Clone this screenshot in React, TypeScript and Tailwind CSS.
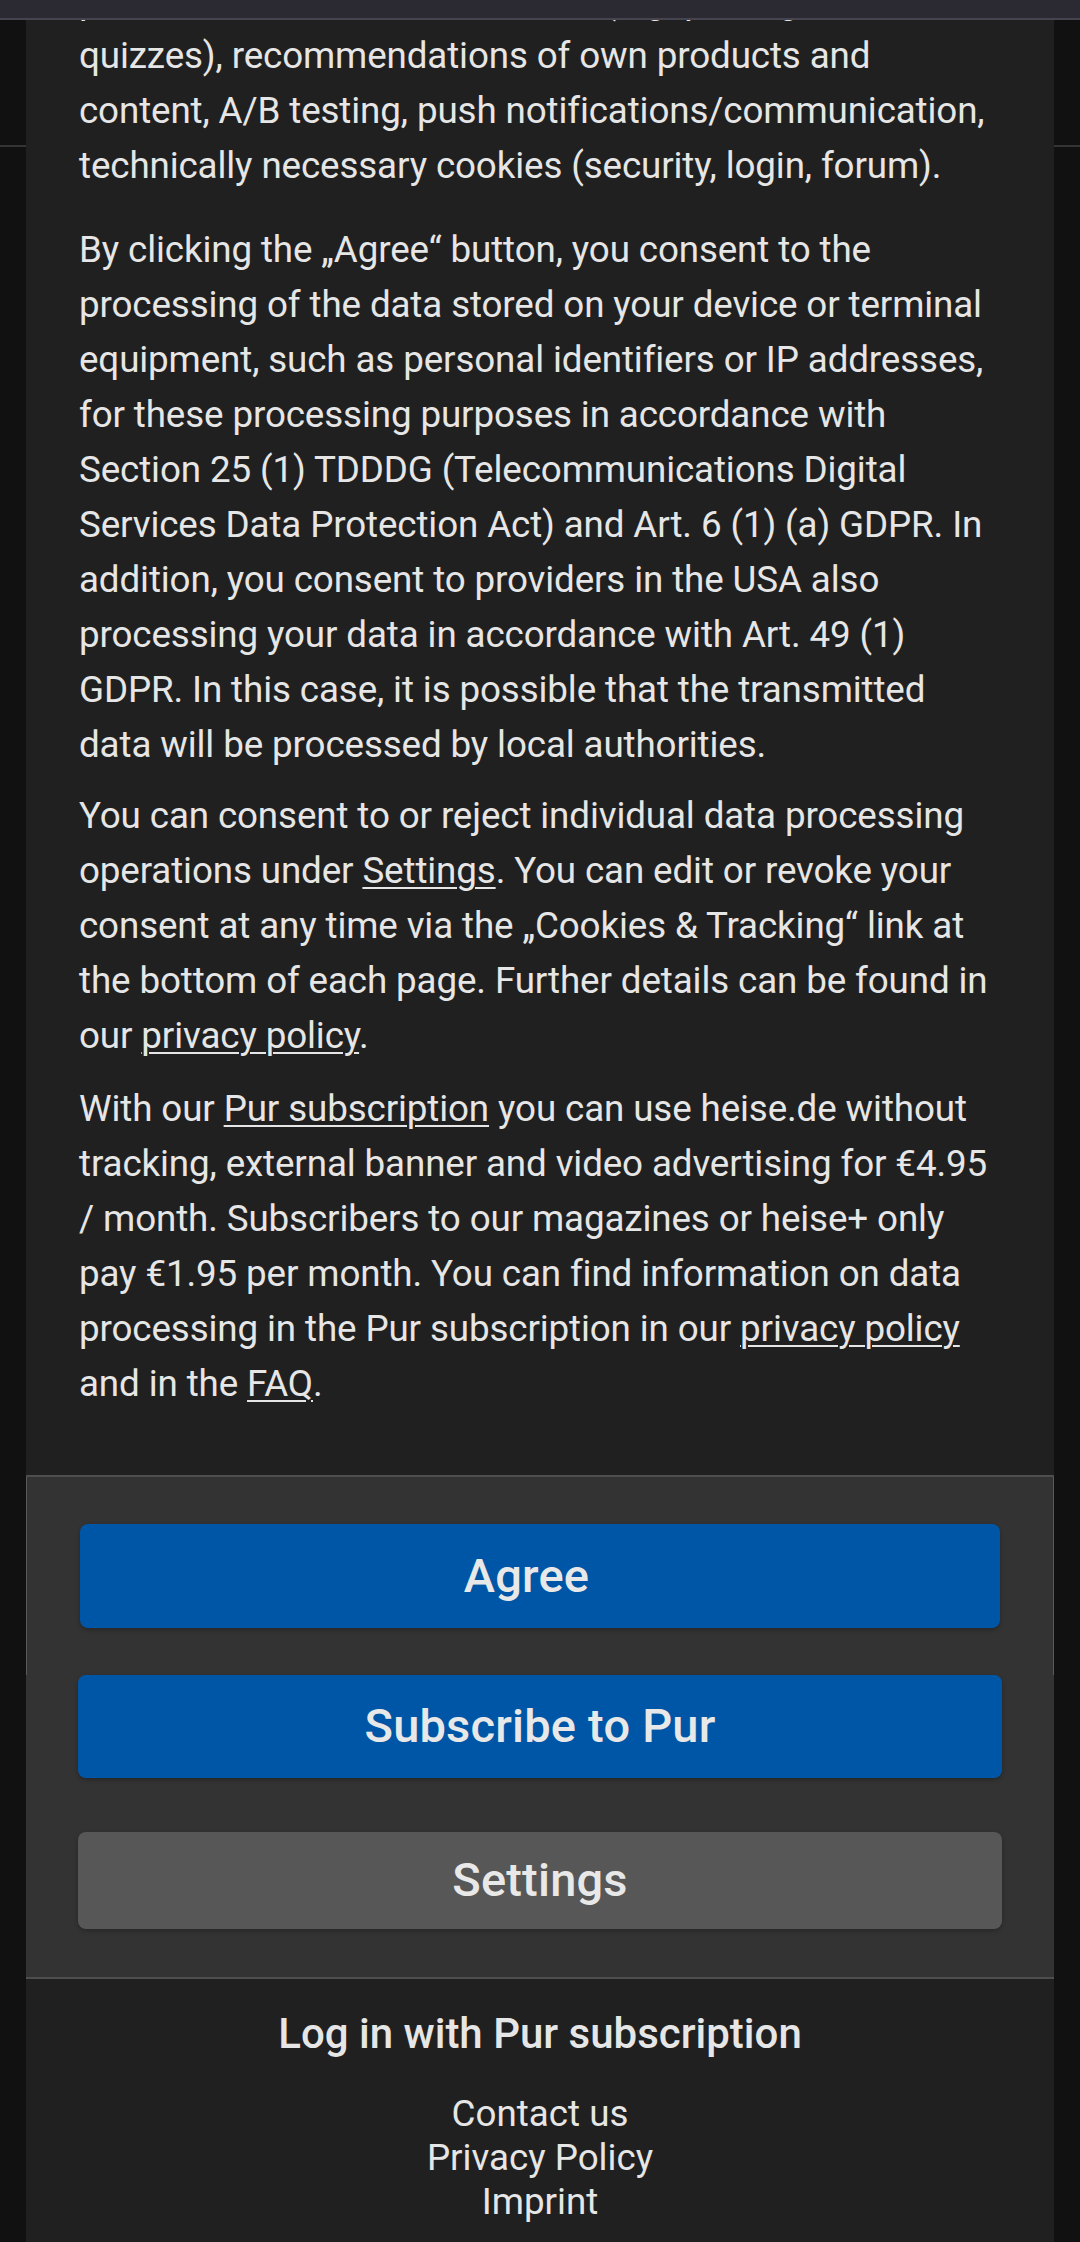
import React from "react";

const font = { fontFamily: "Roboto, 'Noto Sans', 'Liberation Sans', sans-serif" };

function Link({ children }: { children: React.ReactNode }) {
  return <span className="underline decoration-[1.5px] underline-offset-[4px]">{children}</span>;
}

function Button({ label, tone, shift }: { label: string; tone: "blue" | "gray"; shift?: boolean }) {
  const color = tone === "blue" ? "bg-[#0056a6]" : "bg-[#575757]";
  return (
    <button
      className={`w-full flex items-center justify-center rounded-[8px] ${color} ${shift ? "pr-[27px]" : ""} text-[#e8e8e8] text-[47px] font-medium tracking-[0.2px] shadow-[0_2px_4px_rgba(0,0,0,0.25)]`}
      style={font}
    >
      {label}
    </button>
  );
}

export default function App() {
  return (
    <div className="h-[2242px] w-[1080px] overflow-hidden bg-[#111111] flex flex-col" style={font}>
      {/* browser bar on top */}
      <div className="h-[20px] shrink-0 bg-[#2b2a33] border-b-2 border-[#46454f]" />

      <div className="relative flex-1 overflow-hidden flex">
        {/* page behind overlay */}
        <div className="w-[26px] shrink-0">
          <div className="h-[127px] border-b-2 border-[#343434]" />
        </div>

        <div className="w-[1028px] shrink-0 bg-[#202020] flex flex-col">
          <div className="px-[53px] mt-[-46.7px] pb-[64.3px] text-[36.75px] leading-[55px] tracking-[-0.12px] text-[#e6e6e6]">
            <p className="mb-[28.7px]">
              personalised content and offers (e.g. polls, games or
              <br />
              quizzes), recommendations of own products and content, A/B testing, push
              notifications/communication, technically necessary cookies (security, login, forum).
            </p>
            <p className="mb-[16.3px]">
              By clicking the „Agree“ button, you consent to the processing of the data stored on your
              device or terminal equipment, such as personal identifiers or IP addresses, for these
              processing purposes in accordance with Section 25 (1) TDDDG (Telecommunications Digital
              Services Data Protection Act) and Art. 6 (1) (a) GDPR. In addition, you consent to
              providers in the USA also processing your data in accordance with Art. 49 (1) GDPR. In
              this case, it is possible that the transmitted data will be processed by local
              authorities.
            </p>
            <p className="mb-[17.4px]">
              You can consent to or reject individual data processing operations under{" "}
              <Link>Settings</Link>. You can edit or revoke your consent at any time via the „Cookies
              &amp; Tracking“ link at the bottom of each page. Further details can be found in our{" "}
              <Link>privacy policy</Link>.
            </p>
            <p>
              With our <Link>Pur subscription</Link> you can use heise.de without tracking, external
              banner and video advertising for €4.95 / month. Subscribers to our magazines or heise+
              only pay €1.95 per month. You can find information on data processing in the Pur
              subscription in our <Link>privacy policy</Link> and in the <Link>FAQ</Link>.
            </p>
          </div>

          {/* buttons */}
          <div className="bg-[#333333] border-t-2 border-[#4e4e4e]">
            <div className="border-x border-[#5a5a5a] px-[53px] pt-[47px] pb-[47px]">
              <div className="h-[104px] flex">
                <Button label="Agree" tone="blue" shift />
              </div>
            </div>
            <div className="px-[52px] pb-[48px]">
              <div className="h-[103px] flex mb-[54px]">
                <Button label="Subscribe to Pur" tone="blue" />
              </div>
              <div className="h-[97px] flex">
                <Button label="Settings" tone="gray" />
              </div>
            </div>
          </div>

          {/* footer */}
          <div className="border-t-2 border-[#4e4e4e] flex flex-col items-center text-[#e6e6e6]">
            <div className="mt-[30px] text-[42px] leading-[50px] font-medium">Log in with Pur subscription</div>
            <div className="mt-[33px] flex flex-col items-center text-[36.75px] leading-[44.1px]">
              <span>Contact us</span>
              <span>Privacy Policy</span>
              <span>Imprint</span>
            </div>
          </div>
        </div>

        <div className="w-[26px] shrink-0">
          <div className="h-[127px] border-b-2 border-[#343434]" />
        </div>
      </div>
    </div>
  );
}
